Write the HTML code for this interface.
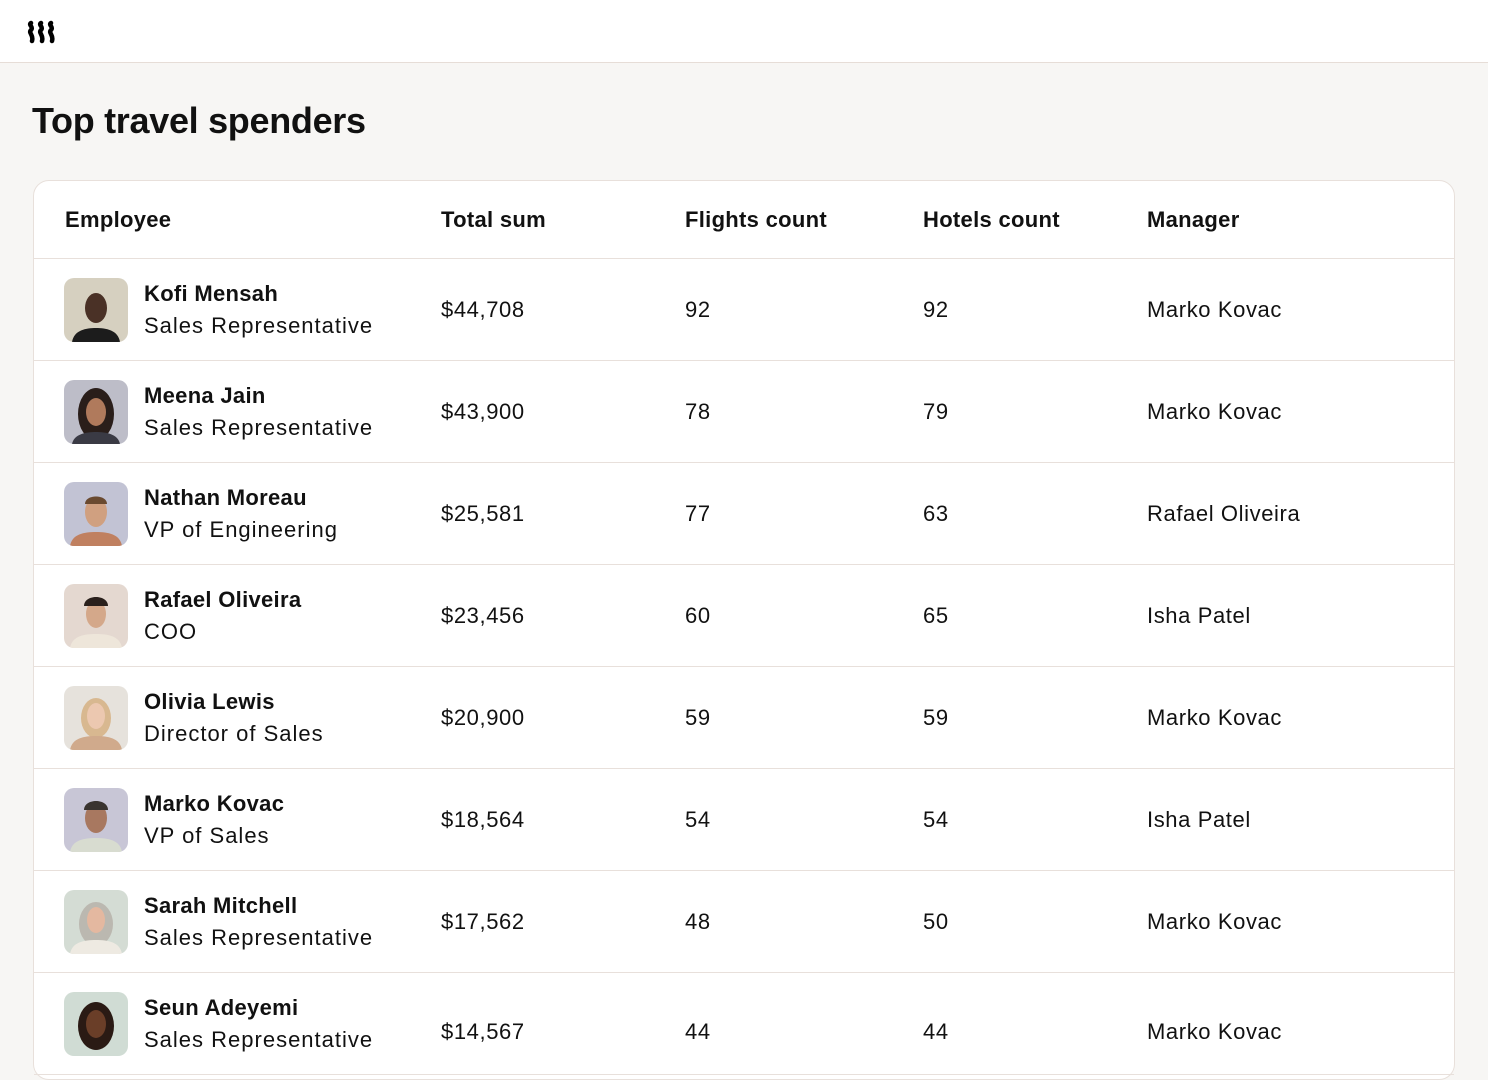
<!DOCTYPE html>
<html><head><meta charset="utf-8"><style>
*{margin:0;padding:0;box-sizing:border-box}
body{width:1488px;height:1030px;overflow:hidden;background:#f7f6f4;font-family:"Liberation Sans",sans-serif;color:#111}
.top{height:63px;background:#fff;border-bottom:1px solid #e6ddd7;position:relative}
.logo{position:absolute;left:25px;top:20px}
h1{position:absolute;left:32px;top:100px;font-size:36px;font-weight:bold;letter-spacing:-0.3px}
.card{position:absolute;left:33px;top:180px;width:1422px;height:900px;background:#fff;border:1px solid #e8e0db;border-radius:16px}
.hr{height:78px;border-bottom:1px solid #e8e0db;position:relative}
.row{height:102px;border-bottom:1px solid #e8e0db;position:relative}
.c{position:absolute;font-size:22px;letter-spacing:0.6px}
.hr .c{top:26px;font-weight:bold;letter-spacing:0.3px}
.row .v{top:38px}
.av{position:absolute;left:30px;top:19px;width:64px;height:64px;border-radius:10px;overflow:hidden}
.n{position:absolute;left:110px;top:22px;font-size:22px;font-weight:bold;letter-spacing:0.3px}
.s{position:absolute;left:110px;top:54px;font-size:22px;letter-spacing:1px}
</style></head><body>
<div class="top"><svg class="logo" width="32" height="24" viewBox="0 0 32 24"><g fill="none" stroke="#000" stroke-width="4.5" stroke-linecap="round"><path d="M6 3c-3 2 3 4 0 7s3 5 1 11"/><path d="M16 3c-3 2 3 4 0 7s3 5 1 11"/><path d="M26 3c-3 2 3 4 0 7s3 5 1 11"/></g></svg></div>
<h1>Top travel spenders</h1>
<div class="card">
<div class="hr"><span class="c" style="left:31px">Employee</span><span class="c" style="left:407px">Total sum</span><span class="c" style="left:651px">Flights count</span><span class="c" style="left:889px">Hotels count</span><span class="c" style="left:1113px">Manager</span></div>

<div class="row"><svg class="av" viewBox="0 0 64 64"><rect width="64" height="64" fill="#d6d0c0"/><path d="M8 64c2-12 14-14 24-14s22 2 24 14z" fill="#1c1c1c"/><ellipse cx="32" cy="30" rx="11" ry="15" fill="#4a3126"/></svg><div class="n">Kofi Mensah</div><div class="s">Sales Representative</div><span class="c v" style="left:407px">$44,708</span><span class="c v" style="left:651px">92</span><span class="c v" style="left:889px">92</span><span class="c v" style="left:1113px">Marko Kovac</span></div>

<div class="row"><svg class="av" viewBox="0 0 64 64"><rect width="64" height="64" fill="#bdbdc8"/><ellipse cx="32" cy="34" rx="18" ry="26" fill="#2a1e1a"/><path d="M8 64c2-10 14-12 24-12s22 2 24 12z" fill="#3a3a44"/><ellipse cx="32" cy="32" rx="10" ry="14" fill="#b07a5c"/></svg><div class="n">Meena Jain</div><div class="s">Sales Representative</div><span class="c v" style="left:407px">$43,900</span><span class="c v" style="left:651px">78</span><span class="c v" style="left:889px">79</span><span class="c v" style="left:1113px">Marko Kovac</span></div>

<div class="row"><svg class="av" viewBox="0 0 64 64"><rect width="64" height="64" fill="#c2c3d4"/><path d="M6 64c2-12 14-14 26-14s24 2 26 14z" fill="#c08060"/><ellipse cx="32" cy="30" rx="11" ry="15" fill="#d0a080"/><path d="M21 22c0-10 22-10 22 0z" fill="#6a4a30"/></svg><div class="n">Nathan Moreau</div><div class="s">VP of Engineering</div><span class="c v" style="left:407px">$25,581</span><span class="c v" style="left:651px">77</span><span class="c v" style="left:889px">63</span><span class="c v" style="left:1113px">Rafael Oliveira</span></div>

<div class="row"><svg class="av" viewBox="0 0 64 64"><rect width="64" height="64" fill="#e4d8d0"/><path d="M6 64c2-12 14-14 26-14s24 2 26 14z" fill="#eee6da"/><ellipse cx="32" cy="30" rx="10" ry="14" fill="#d4a88a"/><path d="M20 22c0-12 24-12 24 0z" fill="#2a201c"/></svg><div class="n">Rafael Oliveira</div><div class="s">COO</div><span class="c v" style="left:407px">$23,456</span><span class="c v" style="left:651px">60</span><span class="c v" style="left:889px">65</span><span class="c v" style="left:1113px">Isha Patel</span></div>

<div class="row"><svg class="av" viewBox="0 0 64 64"><rect width="64" height="64" fill="#e6e2dc"/><ellipse cx="32" cy="32" rx="15" ry="20" fill="#d8b890"/><path d="M6 64c2-12 14-14 26-14s24 2 26 14z" fill="#d0aa8c"/><ellipse cx="32" cy="30" rx="9" ry="13" fill="#ecc8b0"/></svg><div class="n">Olivia Lewis</div><div class="s">Director of Sales</div><span class="c v" style="left:407px">$20,900</span><span class="c v" style="left:651px">59</span><span class="c v" style="left:889px">59</span><span class="c v" style="left:1113px">Marko Kovac</span></div>

<div class="row"><svg class="av" viewBox="0 0 64 64"><rect width="64" height="64" fill="#c8c6d6"/><path d="M6 64c2-12 14-14 26-14s24 2 26 14z" fill="#d8dcd0"/><ellipse cx="32" cy="30" rx="11" ry="15" fill="#a87860"/><path d="M20 22c0-12 24-12 24 0z" fill="#3a3430"/></svg><div class="n">Marko Kovac</div><div class="s">VP of Sales</div><span class="c v" style="left:407px">$18,564</span><span class="c v" style="left:651px">54</span><span class="c v" style="left:889px">54</span><span class="c v" style="left:1113px">Isha Patel</span></div>

<div class="row"><svg class="av" viewBox="0 0 64 64"><rect width="64" height="64" fill="#d4dcd4"/><ellipse cx="32" cy="34" rx="17" ry="22" fill="#bbb8b0"/><path d="M6 64c2-12 14-14 26-14s24 2 26 14z" fill="#eeeae2"/><ellipse cx="32" cy="30" rx="9" ry="13" fill="#e4b8a0"/></svg><div class="n">Sarah Mitchell</div><div class="s">Sales Representative</div><span class="c v" style="left:407px">$17,562</span><span class="c v" style="left:651px">48</span><span class="c v" style="left:889px">50</span><span class="c v" style="left:1113px">Marko Kovac</span></div>

<div class="row"><svg class="av" viewBox="0 0 64 64"><rect width="64" height="64" fill="#d0dcd4"/><ellipse cx="32" cy="34" rx="18" ry="24" fill="#2a1a14"/><ellipse cx="32" cy="32" rx="10" ry="14" fill="#6a3e28"/></svg><div class="n">Seun Adeyemi</div><div class="s">Sales Representative</div><span class="c v" style="left:407px;top:46px">$14,567</span><span class="c v" style="left:651px;top:46px">44</span><span class="c v" style="left:889px;top:46px">44</span><span class="c v" style="left:1113px;top:46px">Marko Kovac</span></div>
</div>
</body></html>
